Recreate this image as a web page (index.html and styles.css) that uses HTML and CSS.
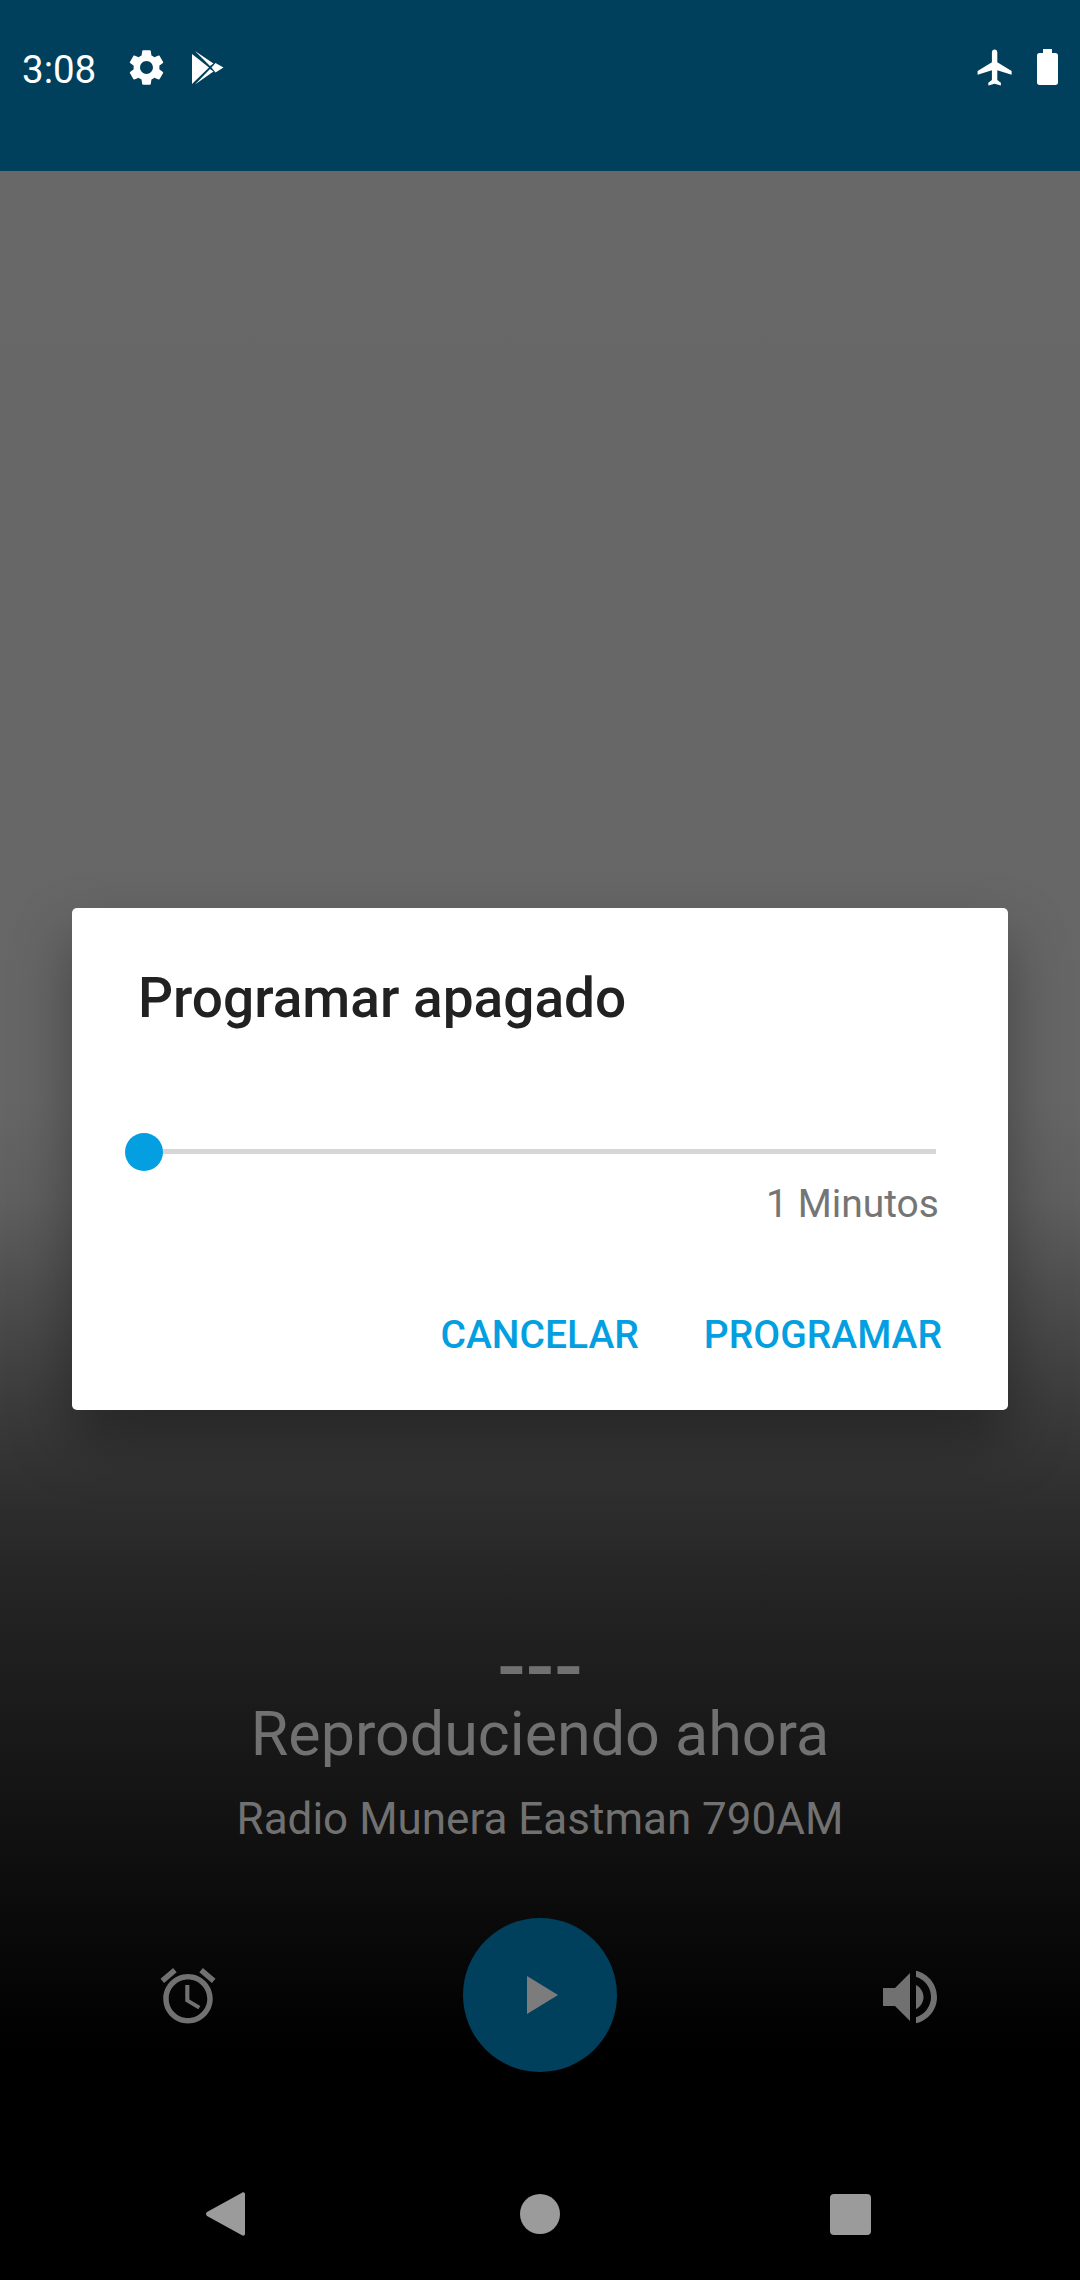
FILE: index.html
```html
<!DOCTYPE html>
<html lang="es">
<head>
  <meta charset="UTF-8" />
  <title>Programar apagado</title>
  <link rel="stylesheet" href="styles.css">
</head>
<body>
  <div class="phone">
    <!-- Status bar -->
    <div class="status-bar">
      <span class="clock">3:08</span>
      <svg class="ic-gear" viewBox="0 0 24 24"><path d="M19.14 12.94c.04-.3.06-.61.06-.94 0-.32-.02-.64-.07-.94l2.03-1.58c.18-.14.23-.41.12-.61l-1.92-3.32c-.12-.22-.37-.29-.59-.22l-2.39.96c-.5-.38-1.03-.7-1.62-.94l-.36-2.54c-.04-.24-.24-.41-.48-.41h-3.84c-.24 0-.43.17-.47.41l-.36 2.54c-.59.24-1.13.57-1.62.94l-2.39-.96c-.22-.08-.47 0-.59.22L2.74 8.87c-.12.21-.08.47.12.61l2.03 1.58c-.05.3-.09.63-.09.94s.02.64.07.94l-2.03 1.58c-.18.14-.23.41-.12.61l1.92 3.32c.12.22.37.29.59.22l2.39-.96c.5.38 1.03.7 1.62.94l.36 2.54c.05.24.24.41.48.41h3.84c.24 0 .44-.17.47-.41l.36-2.54c.59-.24 1.13-.56 1.62-.94l2.39.96c.22.08.47 0 .59-.22l1.92-3.32c.12-.22.07-.47-.12-.61l-2.01-1.58zM12 15.6c-1.98 0-3.6-1.62-3.6-3.6s1.62-3.6 3.6-3.6 3.6 1.62 3.6 3.6-1.62 3.6-3.6 3.6z"/></svg>
      <svg class="ic-store" viewBox="0 0 32 35"><path d="M0 4L0 34L17 17.500ZM3 1L21.500 13.500L18 16ZM3 34.500L21.500 21.500L18 19ZM23.500 13L31.500 17.500L23.500 22.500L19.500 17.500Z"/></svg>
      <span class="spacer"></span>
      <svg class="ic-flight" viewBox="0 0 24 24"><path d="M21 16v-2l-8-5V3.5c0-.83-.67-1.5-1.5-1.5S10 2.67 10 3.5V9l-8 5v2l8-2.5V19l-2 1.5V22l3.5-1 3.5 1v-1.5L13 19v-5.5l8 2.5z"/></svg>
      <svg class="ic-battery" viewBox="0 0 21 36"><path d="M6 0h9v4h3.500C20 4 21 5 21 6.500v27c0 1.500-1 2.500-2.500 2.500h-16C1 36 0 35 0 33.500v-27C0 5 1 4 2.500 4H6z"/></svg>
    </div>

    <!-- Player -->
    <div class="screen">
      <div class="now-playing">
        <div class="track">---</div>
        <div class="heading">Reproduciendo ahora</div>
        <div class="station">Radio Munera Eastman 790AM</div>
      </div>
      <div class="controls">
        <svg class="ic-alarm" viewBox="0 0 24 24"><path d="M22 5.720l-4.600-3.860-1.290 1.530 4.600 3.860L22 5.720zM7.880 3.390L6.600 1.860 2 5.710l1.290 1.530 4.590-3.850zM12.500 8H11v6l4.750 2.850.75-1.230-4-2.370V8zM12 4c-4.970 0-9 4.030-9 9s4.020 9 9 9c4.970 0 9-4.030 9-9s-4.030-9-9-9zm0 16c-3.870 0-7-3.130-7-7s3.130-7 7-7 7 3.130 7 7-3.130 7-7 7z"/></svg>
        <div class="play-btn"><svg class="ic-play" viewBox="0 0 31 38"><path d="M0 0L31 19L0 38Z"/></svg></div>
        <svg class="ic-volume" viewBox="0 0 24 24"><path d="M3 9v6h4l5 5V4L7 9H3zm13.500 3c0-1.770-1.020-3.290-2.500-4.030v8.050c1.480-.73 2.500-2.250 2.500-4.020zM14 3.230v2.060c2.890.86 5 3.540 5 6.710s-2.110 5.850-5 6.710v2.060c4.010-.91 7-4.490 7-8.770s-2.990-7.860-7-8.770z"/></svg>
      </div>
      <div class="nav-bar">
        <svg class="ic-back" viewBox="0 0 39 44"><path d="M36 .8C37.500-.2 39 .5 39 2.500v39c0 2-1.500 2.700-3 1.700L1 24c-1.300-1-1.300-3 0-4z"/></svg>
        <div class="nav-home"></div>
        <div class="nav-recent"></div>
      </div>
    </div>

    <!-- Dialog -->
    <div class="dialog">
      <h2 class="dialog-title">Programar apagado</h2>
      <div class="slider"><span class="thumb"></span></div>
      <div class="minutes">1 Minutos</div>
      <div class="actions">
        <span class="action">CANCELAR</span>
        <span class="action">PROGRAMAR</span>
      </div>
    </div>
  </div>
</body>
</html>
```

FILE: styles.css
```css
* {
  box-sizing: border-box;
}
body {
  margin: 0;
  background-color: #000;
  font-family: Roboto, "Liberation Sans", sans-serif;
}
svg {
  display: block;
  flex: none;
}
.phone {
  position: relative;
  width: 1080px;
  height: 2280px;
  overflow: hidden;
  display: flex;
  flex-direction: column;
}

/* status bar */
.status-bar {
  height: 171px;
  flex: none;
  background-color: #00405c;
  display: flex;
  align-items: flex-start;
  padding: 45px 22px 0 22px;
  fill: #fff;
}
.clock {
  color: #fff;
  font-size: 38.5px;
  line-height: 50px;
  width: 77px;
}
.ic-gear {
  width: 43px;
  height: 43px;
  margin: 1px 0 0 26px;
}
.ic-store {
  width: 32px;
  height: 35px;
  margin: 5px 0 0 24px;
}
.spacer {
  flex: 1;
}
.ic-flight {
  width: 43px;
  height: 43px;
  margin: 1px -1px 0 0;
}
.ic-battery {
  width: 21px;
  height: 36px;
  margin: 4px 0 0 21px;
}

/* player */
.screen {
  flex: 1;
  display: flex;
  flex-direction: column;
  background: linear-gradient(to bottom,
    #686868 0, #666 929px, #5f5f5f 1029px, #4d4d4d 1129px, #3c3c3c 1229px,
    #2e2e2e 1329px, #232323 1429px, #121212 1649px, #000 1879px);
}
.now-playing {
  margin-top: 1476px;
  text-align: center;
}
.track {
  color: #717171;
  font-size: 84px;
  font-weight: 500;
  line-height: 40px;
  height: 47px;
}
.heading {
  color: #717171;
  font-size: 61px;
  line-height: 80px;
}
.station {
  margin-top: 15px;
  color: #717171;
  font-size: 44px;
  line-height: 60px;
}
.controls {
  display: grid;
  grid-template-columns: 1fr auto 1fr;
  align-items: center;
  margin-top: 69px;
  padding: 0 134px;
}
.play-btn {
  width: 154px;
  height: 154px;
  border-radius: 50%;
  background-color: #00405c;
  display: flex;
  align-items: center;
  justify-content: center;
}
.ic-play {
  width: 31px;
  height: 38px;
  margin-left: 4px;
  fill: #7c7c7c;
}
.ic-alarm {
  width: 66px;
  height: 66px;
  margin: 2px 0 0 21px;
  fill: #717171;
}
.ic-volume {
  width: 72px;
  height: 72px;
  margin-top: 3px;
  justify-self: end;
  fill: #717171;
}
.nav-bar {
  display: flex;
  align-items: center;
  height: 44px;
  margin-top: 120px;
  padding-left: 206px;
}
.ic-back {
  width: 39px;
  height: 44px;
  fill: #9b9b9b;
}
.nav-home {
  width: 40px;
  height: 40px;
  margin-left: 275px;
  border-radius: 50%;
  background-color: #9b9b9b;
}
.nav-recent {
  width: 41px;
  height: 41px;
  margin-left: 270px;
  border-radius: 4px;
  background-color: #9b9b9b;
}

/* dialog */
.dialog {
  position: absolute;
  left: 72px;
  top: 908px;
  width: 936px;
  height: 502px;
  padding: 60px 60px 0 66px;
  background-color: #fff;
  border-radius: 5px;
  box-shadow: 0 30px 60px rgba(0,0,0,0.35);
}
.dialog-title {
  margin: 0;
  color: #212121;
  font-size: 55px;
  font-weight: 500;
  line-height: 60px;
}
.slider {
  position: relative;
  height: 5px;
  margin: 121px 12px 0 6px;
  background-color: #d6d6d6;
}
.thumb {
  position: absolute;
  left: -19px;
  top: -16.5px;
  width: 38px;
  height: 38px;
  border-radius: 50%;
  background-color: #039fe0;
}
.minutes {
  margin: 28px 9px 0 0;
  color: #757575;
  font-size: 39px;
  line-height: 44px;
  text-align: right;
}
.actions {
  display: flex;
  justify-content: flex-end;
  gap: 65px;
  margin: 87px 6px 0 0;
}
.action {
  color: #039fe0;
  font-size: 39px;
  font-weight: 500;
  line-height: 44px;
}
```
